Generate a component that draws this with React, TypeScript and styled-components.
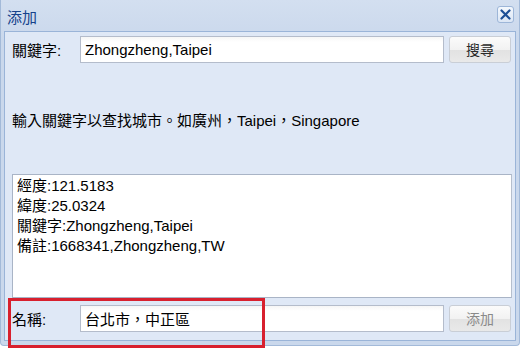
import React from 'react';
import styled, {createGlobalStyle} from 'styled-components';

const GlobalStyle = createGlobalStyle`
    html, body { margin: 0; padding: 0; background: #ffffff; }
    body { font-family: "Liberation Sans", "Noto Sans CJK TC", sans-serif; }
`;

const Window = styled.div`
    position: relative;
    box-sizing: border-box;
    width: 520px;
    height: 346px;
    display: flex;
    flex-direction: column;
    padding: 0 3px 4px 3px;
    background: linear-gradient(#d3dff0, #cad8ec 40px, #cad8ec);
    border: 1px solid #a3bad9;
    border-top: none;
    border-radius: 0 0 4px 4px;
`;

const Header = styled.div`
    height: 31px;
    display: flex;
    align-items: center;
    justify-content: space-between;
    padding: 0 2px 0 3px;
`;

const Title = styled.span`
    font-size: 15px;
    color: #15428b;
    font-family: "Noto Sans CJK TC", sans-serif;
    margin-top: 1px;
`;

const CloseButton = styled.div`
    box-sizing: border-box;
    width: 17px;
    height: 17px;
    margin-top: -3px;
    display: flex;
    align-items: center;
    justify-content: center;
    border: 1px solid #9db6d8;
    border-radius: 3px;
    background: linear-gradient(#f4f8fd, #dbe6f5);
`;

const Body = styled.div`
    flex: 1;
    display: flex;
    flex-direction: column;
    padding: 3px 3px 0 7px;
    background: #dfe8f6;
    border: 1px solid #9ab4d8;
`;

const FieldRow = styled.div`
    display: flex;
    align-items: center;
    height: 28px;
`;

const Label = styled.span`
    width: 68px;
    font-size: 15px;
    color: #000;
`;

const Input = styled.div`
    box-sizing: border-box;
    width: 364px;
    height: 27px;
    display: flex;
    align-items: center;
    padding-left: 4px;
    font-size: 15px;
    color: #000;
    background: linear-gradient(#f6f6f6, #ffffff 5px);
    border: 1px solid #b4bccb;
`;

const Button = styled.div<{$disabled?: boolean}>`
    box-sizing: border-box;
    width: 62px;
    height: 27px;
    margin-left: auto;
    margin-right: 1px;
    display: flex;
    align-items: center;
    justify-content: center;
    font-size: 14px;
    font-family: "Noto Sans CJK TC", sans-serif;
    color: ${({$disabled}) => ($disabled ? '#8a8a8a' : '#2a2a2a')};
    background: linear-gradient(#fbfbfb, #f2f2f2 50%, #e2e2e2 51%, #e9e9e9);
    border: 1px solid #c9ced6;
    border-radius: 3px;
`;

const Hint = styled.div`
    margin-top: 46px;
    height: 20px;
    font-size: 15px;
    color: #000;
`;

const ResultBox = styled.div`
    box-sizing: border-box;
    margin-top: 45px;
    height: 124px;
    padding: 1px 4px;
    background: #ffffff;
    border: 1px solid #a9b4c6;
    border-right-color: #b6bfcd;
`;

const ResultLine = styled.div`
    height: 20px;
    line-height: 20px;
    font-size: 15px;
    color: #000;
`;

const BottomRow = styled(FieldRow)`
    margin-top: 6px;
`;

const Highlight = styled.div`
    position: absolute;
    left: 8px;
    top: 298px;
    width: 257px;
    height: 50px;
    box-sizing: border-box;
    border: 3px solid #d8202e;
    pointer-events: none;
`;

const CloseIcon = () => (
    <svg width="11" height="11" viewBox="0 0 11 11">
        <path d="M1.5 1.5 L9.5 9.5 M9.5 1.5 L1.5 9.5" stroke="#1d4f96" strokeWidth="2.2" strokeLinecap="round"/>
    </svg>
);

const results = [
    '經度:121.5183',
    '緯度:25.0324',
    '關鍵字:Zhongzheng,Taipei',
    '備註:1668341,Zhongzheng,TW',
];

export default function App() {
    return (
        <>
            <GlobalStyle/>
            <Window>
                <Header>
                    <Title>添加</Title>
                    <CloseButton><CloseIcon/></CloseButton>
                </Header>
                <Body>
                    <FieldRow>
                        <Label>關鍵字:</Label>
                        <Input>Zhongzheng,Taipei</Input>
                        <Button>搜尋</Button>
                    </FieldRow>
                    <Hint>輸入關鍵字以查找城市。如廣州，Taipei，Singapore</Hint>
                    <ResultBox>
                        {results.map(r => <ResultLine key={r}>{r}</ResultLine>)}
                    </ResultBox>
                    <BottomRow>
                        <Label>名稱:</Label>
                        <Input>台北市，中正區</Input>
                        <Button $disabled>添加</Button>
                    </BottomRow>
                </Body>
            </Window>
            <Highlight/>
        </>
    );
}
